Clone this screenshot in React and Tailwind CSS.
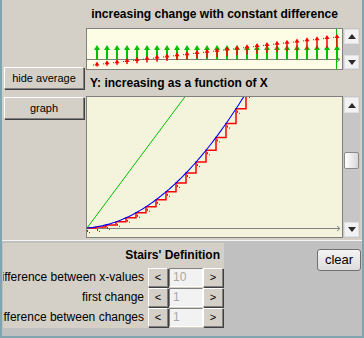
import React from "react";

const FONT = { fontFamily: '"Liberation Sans", Arial, sans-serif' };

function ScrollArrow({ up }) {
  return (
    <svg width="8" height="5" viewBox="0 0 8 5">
      <polygon points={up ? "0,5 4,0 8,5" : "0,0 4,5 8,0"} fill="#2b2b2b" />
    </svg>
  );
}

function ScrollButton({ up, className }) {
  return (
    <div className={"flex items-center justify-center bg-[#f2f2f2] border border-[#e0e0e0] " + className}>
      <ScrollArrow up={up} />
    </div>
  );
}

function TopGraph() {
  const items = Array.from({ length: 25 }, (_, i) => i);
  return (
    <div className="w-[257px] h-[42px] border border-[#808080] bg-[#fdfde6]">
      <svg width="255" height="40" viewBox="87 29 255 40" className="block">
        <line x1="87" y1="59.5" x2="339" y2="59.5" stroke="#808080" />
        <polyline points="337,57 340,59.5 337,62" fill="none" stroke="#808080" />
        <line x1="336.5" y1="29" x2="336.5" y2="69" stroke="#00c000" />
        {items.map((i) => {
          const x = 96 + 10 * i;
          const ty = 61.5 - 1.15 * i;
          const len = 3 + 0.35 * i;
          return (
            <g key={i}>
              <rect x={x} y="48" width="2" height="11.5" fill="#00c000" />
              <polygon points={`${x + 1},45 ${x - 2},50 ${x + 4},50`} fill="#00c000" />
              <rect x={x + 0.25} y={ty + 2} width="1.5" height={len} fill="#ff0000" />
              <polygon points={`${x + 1},${ty} ${x - 1.5},${ty + 4} ${x + 3.5},${ty + 4}`} fill="#ff0000" />
              <rect x={x - 3} y={ty + 3} width="1" height="1" fill="#ff0000" />
            </g>
          );
        })}
      </svg>
    </div>
  );
}

function f(x) {
  const dx = x - 87;
  return 228 - (0.00489 * dx * dx + 0.0714 * dx);
}

function BottomGraph() {
  const blue = [];
  for (let dx = 0; dx <= 162; dx += 2) blue.push(`${87 + dx},${f(87 + dx).toFixed(1)}`);
  let stairs = "M87,228";
  const marks = [];
  for (let k = 1; k <= 17; k++) {
    const x = 86 + 10 * k;
    const prev = k === 1 ? 228 : f(x - 10);
    stairs += ` L${x},${prev.toFixed(1)} L${x},${f(x).toFixed(1)}`;
    marks.push(
      <g key={k}>
        <rect x={x - 9} y={prev + 2} width="1" height="2" fill="#ff0000" />
        <rect x={x - 7} y={prev + 4} width="1" height="1" fill="#ff0000" />
      </g>
    );
  }
  return (
    <div className="w-[257px] h-[142px] border border-[#808080] bg-[#f4f4dd]">
      <svg width="255" height="140" viewBox="87 97 255 140" className="block">
        <line x1="87" y1="228.5" x2="339" y2="228.5" stroke="#808080" />
        <polyline points="337,226 340,228.5 337,231" fill="none" stroke="#808080" />
        <line x1="87" y1="228" x2="187" y2="94" stroke="#00c000" />
        <path d={stairs} fill="none" stroke="#ff0000" strokeWidth="1.5" />
        {marks}
        <polyline points={blue.join(" ")} fill="none" stroke="#0000ff" strokeWidth="1.1" />
      </svg>
    </div>
  );
}

function RaisedButton({ children, className }) {
  return (
    <div
      className={
        "flex items-center justify-center bg-[#d4d0c8] border border-t-white border-l-white border-r-[#808080] border-b-[#808080] shadow-[1px_1px_0_#404040] " +
        className
      }
    >
      {children}
    </div>
  );
}

function StepRow({ label, value }) {
  return (
    <div className="flex h-[20px] items-center">
      <div className="w-[145px] flex justify-end overflow-hidden pr-[4px] whitespace-nowrap text-[12px] text-black">
        {label}
      </div>
      <RaisedButton className="w-[20px] h-[19px] text-[11px]">&lt;</RaisedButton>
      <div className="ml-[1px] w-[34px] h-[19px] flex items-center pl-[3px] bg-[#f2f2f2] border border-t-[#808080] border-l-[#808080] border-r-white border-b-white text-[12px] text-[#a8a8a8]">
        {value}
      </div>
      <RaisedButton className="w-[20px] h-[19px] text-[11px]">&gt;</RaisedButton>
    </div>
  );
}

export default function App() {
  return (
    <div
      style={FONT}
      className="w-[364px] h-[338px] bg-[#d4d0c8] border-l-2 border-r-2 border-b-2 border-[#7ea5b0] flex flex-col overflow-hidden"
    >
      <div className="flex h-[240px]">
        <div className="w-[84px] pl-[2px] pt-[67px] flex flex-col gap-[8px]">
          <RaisedButton className="w-[80px] h-[22px] text-[11px] text-black">hide average</RaisedButton>
          <RaisedButton className="w-[80px] h-[22px] text-[11px] text-black">graph</RaisedButton>
        </div>
        <div className="w-[274px] flex flex-col">
          <div className="w-[257px] h-[28px] flex items-center justify-center text-[12px] font-bold text-black">
            increasing change with constant difference
          </div>
          <div className="flex">
            <TopGraph />
            <div className="w-[17px] h-[42px] flex flex-col bg-[#c6c6c6] p-[1px]">
              <ScrollButton up className="h-[15px]" />
              <div className="flex-1" />
              <ScrollButton className="h-[14px]" />
            </div>
          </div>
          <div className="h-[26px] flex items-center pl-[4px] text-[12px] font-bold text-black">
            Y: increasing as a function of X
          </div>
          <div className="flex">
            <BottomGraph />
            <div className="w-[17px] h-[142px] flex flex-col bg-[#c6c6c6] p-[1px]">
              <ScrollButton up className="h-[16px]" />
              <div className="h-[39px]" />
              <div className="h-[17px] rounded-[2px] border border-[#8a8a8a] bg-gradient-to-r from-white to-[#d8d8d8]" />
              <div className="flex-1" />
              <ScrollButton className="h-[15px]" />
            </div>
          </div>
        </div>
      </div>
      <div className="flex-1 bg-[#c0c0c0] border-t border-[#f4f4f4] flex items-start">
        <div className="ml-[1px] mt-[2px] w-[221px] bg-[#d4d0c8] flex flex-col pb-[1px]">
          <div className="h-[24px] flex items-center justify-end pr-[4px] text-[12px] font-bold text-black">
            Stairs' Definition
          </div>
          <StepRow label="difference between x-values" value="10" />
          <StepRow label="first change" value="1" />
          <StepRow label="difference between changes" value="1" />
        </div>
        <div className="flex-1 flex justify-end pr-[1px] pt-[8px]">
          <div className="w-[44px] h-[22px] rounded-[3px] border border-[#707070] bg-gradient-to-b from-[#f4f4f4] to-[#dcdcdc] flex items-center justify-center text-[13px] text-black">
            clear
          </div>
        </div>
      </div>
    </div>
  );
}
